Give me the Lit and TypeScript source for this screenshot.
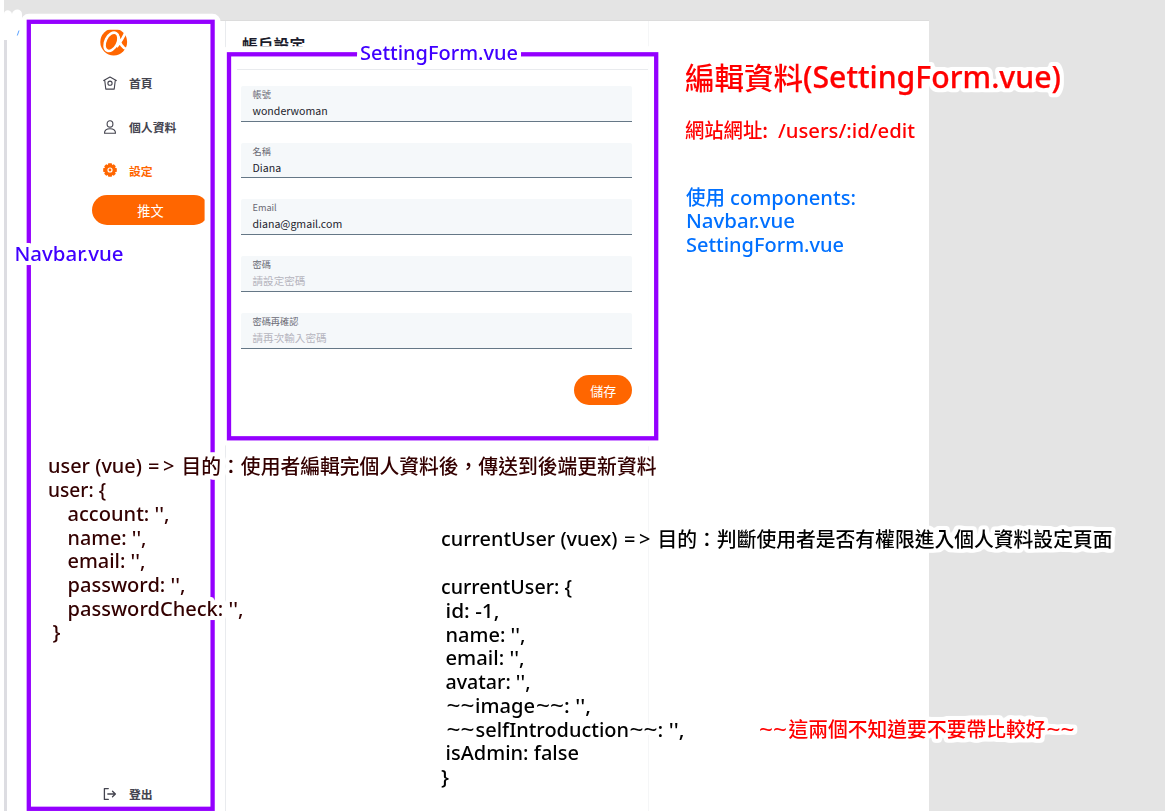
import { LitElement, html, svg, css } from "lit";
import { customElement } from "lit/decorators.js";

interface Note {
  x: number;
  y: number;
  w: number;
  text: string;
  tone: string;
  size?: number;
  cjk?: boolean;
  spread?: boolean;
}

const NOTES: Note[] = [
  { x: 14.5, y: 261, w: 109, text: "Navbar.vue", tone: "violet" },
  { x: 360, y: 60, w: 158, text: "SettingForm.vue", tone: "violet" },
  { x: 685, y: 88.5, w: 118, text: "編輯資料", tone: "red", size: 29.5, cjk: true },
  { x: 803, y: 88, w: 258, text: "(SettingForm.vue)", tone: "red big", size: 30 },
  { x: 685, y: 138, w: 83, text: "網站網址:", tone: "red", cjk: true },
  { x: 778, y: 138, w: 137, text: "/users/:id/edit", tone: "red" },
  { x: 686, y: 205, w: 39, text: "使用", tone: "blue", cjk: true },
  { x: 730, y: 205, w: 126, text: "components:", tone: "blue" },
  { x: 686, y: 228, w: 109, text: "Navbar.vue", tone: "blue" },
  { x: 686, y: 252, w: 158, text: "SettingForm.vue", tone: "blue" },

  { x: 48, y: 473, w: 94, text: "user (vue)", tone: "brown" },
  { x: 148, y: 473, w: 26.5, text: "=>", tone: "brown", spread: true },
  { x: 181.5, y: 473.5, w: 475, text: "目的：使用者編輯完個人資料後，傳送到後端更新資料", tone: "brown", cjk: true },
  { x: 48, y: 497, w: 58, text: "user: {", tone: "brown" },
  { x: 67.5, y: 521, w: 102, text: "account: '',", tone: "brown" },
  { x: 67.5, y: 545, w: 79, text: "name: '',", tone: "brown" },
  { x: 67.5, y: 568, w: 78, text: "email: '',", tone: "brown" },
  { x: 67.5, y: 592, w: 118, text: "password: '',", tone: "brown" },
  { x: 67.5, y: 616, w: 176, text: "passwordCheck: '',", tone: "brown" },
  { x: 52.5, y: 639, w: 8, text: "}", tone: "brown" },

  { x: 441, y: 546, w: 176.5, text: "currentUser (vuex)", tone: "black" },
  { x: 624, y: 546, w: 26.5, text: "=>", tone: "black", spread: true },
  { x: 657.5, y: 546.5, w: 455, text: "目的：判斷使用者是否有權限進入個人資料設定頁面", tone: "black", cjk: true },
  { x: 441, y: 594, w: 131, text: "currentUser: {", tone: "black" },
  { x: 445.5, y: 618, w: 54, text: "id: -1,", tone: "black" },
  { x: 445.5, y: 641.5, w: 80, text: "name: '',", tone: "black" },
  { x: 445.5, y: 665, w: 79, text: "email: '',", tone: "black" },
  { x: 445.5, y: 689, w: 85, text: "avatar: '',", tone: "black" },
  { x: 446.5, y: 713, w: 28, text: "~~", tone: "black" },
  { x: 475, y: 713, w: 60, text: "image", tone: "black" },
  { x: 536, y: 713, w: 28, text: "~~", tone: "black" },
  { x: 564, y: 713, w: 27, text: ": '',", tone: "black" },
  { x: 446.5, y: 736.5, w: 28, text: "~~", tone: "black" },
  { x: 475.5, y: 736.5, w: 153.5, text: "selfIntroduction", tone: "black" },
  { x: 629.5, y: 736.5, w: 28, text: "~~", tone: "black" },
  { x: 657.5, y: 736.5, w: 27, text: ": '',", tone: "black" },
  { x: 445.5, y: 760, w: 133.5, text: "isAdmin: false", tone: "black" },
  { x: 441, y: 784, w: 8, text: "}", tone: "black" },

  { x: 759, y: 736.5, w: 28, text: "~~", tone: "red" },
  { x: 788.5, y: 737, w: 257, text: "這兩個不知道要不要帶比較好", tone: "red", cjk: true },
  { x: 1046.5, y: 736.5, w: 28, text: "~~", tone: "red" },
];

const homeIcon = svg`<g fill="none" stroke="currentColor" stroke-width="1.1" stroke-linejoin="round" stroke-linecap="round">
  <path d="M.7 4.600 7 1l6.300 3.600M1.700 4.100l1.100 9h8.400l1.100-9"/><circle cx="7" cy="7.200" r="2.100"/></g>`;
const userIcon = svg`<g fill="none" stroke="currentColor" stroke-width="1.1" stroke-linejoin="round">
  <ellipse cx="7" cy="3.900" rx="2.900" ry="3.200"/><path d="M1.500 13.200c0-3 2.300-4.500 5.500-4.500s5.500 1.500 5.500 4.500z"/></g>`;
const gearIcon = svg`<path fill="currentColor" fill-rule="evenodd" d="M5.300.2h3.400l.5 1.800 1.600-.8 2 2-.8 1.600 1.800.5v3.400l-1.800.5.8 1.600-2 2-1.600-.8-.5 1.800H5.300L4.800 12l-1.600.8-2-2L2 9.200.2 8.700V5.300L2 4.800l-.8-1.600 2-2 1.600.8zM7 4.400a2.600 2.600 0 1 0 0 5.200 2.600 2.600 0 0 0 0-5.200z"/>
  <circle cx="7" cy="7" r="1.400" fill="currentColor"/>`;
const exitIcon = svg`<g fill="none" stroke="currentColor" stroke-width="1.3" stroke-linejoin="round" stroke-linecap="round">
  <path d="M5.300 1.600H1.400v10.800h3.900M4.800 7h7.300M9.500 4.200 12.400 7 9.500 9.800"/></g>`;

@customElement("side-nav")
class SideNav extends LitElement {
  static styles = css`
    :host {
      display: flex;
      flex-direction: column;
      width: 219px;
      box-sizing: border-box;
      padding: 7px 0 5.500px 85px;
      border-right: 1px solid #e9ebee;
      color: #44444f;
    }
    .logo { display: block; width: 28px; height: 28px; margin-left: 8px; }
    .items { display: flex; flex-direction: column; gap: 20px; padding: 15px 0 0 11.300px; }
    .item {
      display: flex;
      align-items: center;
      gap: 11.700px;
      height: 23.800px;
      font-size: 11.850px;
      font-weight: 700;
    }
    .item svg { width: 14px; height: 14px; display: block; }
    .active { color: #ff6600; }
    .tweet {
      width: 117px;
      height: 30px;
      margin-top: 13px;
      border-radius: 15px;
      background: #ff6600;
      color: #fff;
      font-size: 13.200px;
      line-height: 31px;
      text-align: center;
    }
    .logout { margin: auto 0 0 11.300px; }
  `;

  row(icon: unknown, label: string, cls = "") {
    return html`<div class="item ${cls}"><svg viewBox="0 0 14 14">${icon}</svg><span>${label}</span></div>`;
  }

  render() {
    return html`
      <svg class="logo" viewBox="0 0 28 28">
        <circle cx="13.700" cy="14" r="13.400" fill="#ff6600" />
        <g fill="none" stroke="#fff" stroke-width="2.600">
          <ellipse cx="11.500" cy="13.800" rx="6" ry="9.800" transform="rotate(27 11.500 13.800)" />
          <path d="M26 3C24 8.500 21 13.500 16.500 19M18.500 8.500c.8 5.500 2.500 11.500 9 13" />
        </g>
      </svg>
      <div class="items">
        ${this.row(homeIcon, "首頁")} ${this.row(userIcon, "個人資料")}
        ${this.row(gearIcon, "設定", "active")}
      </div>
      <div class="tweet">推文</div>
      ${this.row(exitIcon, "登出", "logout")}
    `;
  }
}

@customElement("setting-form")
class SettingForm extends LitElement {
  static styles = css`
    :host { display: block; width: 423px; box-sizing: border-box; border-right: 1px solid #f5f6f7; }
    .head {
      height: 49px;
      box-sizing: border-box;
      padding: 12px 0 0 16px;
      border-bottom: 1px solid #e9ebee;
      font-size: 15.800px;
      line-height: 24px;
      font-weight: 700;
      color: #1c1c2c;
    }
    .form { display: flex; flex-direction: column; gap: 20.900px; padding: 16px 15.700px 0 15px; }
    .field {
      height: 35.800px;
      box-sizing: border-box;
      padding: 1px 11.500px 0;
      background: #f5f8fa;
      border-bottom: 1.500px solid #657786;
      border-radius: 2px 2px 0 0;
    }
    .label { height: 15px; line-height: 15px; font-size: 9.200px; color: #696974; }
    .value { height: 16px; line-height: 17px; font-size: 10.600px; color: #1c1c2c; }
    .empty { color: #b5b5be; }
    .save {
      align-self: flex-end;
      width: 58px;
      height: 30px;
      margin-top: 6px;
      border-radius: 15px;
      background: #ff6600;
      color: #fff;
      font-size: 13px;
      line-height: 31px;
      text-align: center;
    }
  `;

  field(label: string, value: string, hint = "") {
    return html`<div class="field">
      <div class="label">${label}</div>
      <div class="value ${value ? "" : "empty"}">${value || hint}</div>
    </div>`;
  }

  render() {
    return html`
      <div class="head">帳戶設定</div>
      <div class="form">
        ${this.field("帳號", "wonderwoman")} ${this.field("名稱", "Diana")}
        ${this.field("Email", "diana@gmail.com")}
        ${this.field("密碼", "", "請設定密碼")}
        ${this.field("密碼再確認", "", "請再次輸入密碼")}
        <div class="save">儲存</div>
      </div>
    `;
  }
}

@customElement("note-layer")
class NoteLayer extends LitElement {
  static styles = css`
    :host { display: block; position: absolute; inset: 0; pointer-events: none; }
    svg { display: block; width: 1165px; height: 811px; }
    text {
      font-family: "Noto Sans", "Noto Sans CJK TC", sans-serif;
      font-weight: 500;
      white-space: pre;
    }
    .cjk { font-family: "Noto Sans CJK TC", sans-serif; }
    .halo-box { fill: none; stroke: #fff; stroke-width: 16px; stroke-linejoin: round; }
    .box { fill: none; stroke: #9400ff; stroke-width: 4.300px; }
    .violet { fill: #4000ff; }
    .red { fill: #ff0000; }
    .blue { fill: #0070ff; }
    .brown { fill: #330000; }
    .black { fill: #000; }
    .big { stroke: #ff0000; stroke-width: 0.250px; }
  `;

  text(n: Note) {
    return svg`<text class="${n.tone} ${n.cjk ? "cjk" : ""}" x=${n.x} y=${n.y} font-size=${n.size ?? 20}
      textLength=${n.w} lengthAdjust=${n.spread ? "spacing" : "spacingAndGlyphs"}>${n.text}</text>`;
  }

  render() {
    return html`<svg viewBox="0 0 1165 811">
      <defs>
        <filter id="halo" filterUnits="userSpaceOnUse" x="0" y="0" width="1165" height="811" color-interpolation-filters="sRGB">
          <feMorphology in="SourceAlpha" operator="dilate" radius="3" />
          <feGaussianBlur stdDeviation="1.800" />
          <feColorMatrix values="0 0 0 0 1  0 0 0 0 1  0 0 0 0 1  0 0 0 5 -0.700" result="glow" />
          <feMerge><feMergeNode in="glow" /><feMergeNode in="SourceGraphic" /></feMerge>
        </filter>
      </defs>
      <path fill="#fff" d="M4 14c0-5 7-5 8 0 1-6 10-6 10 0v26H4z" />
      <path stroke="#5aa2ff" stroke-width="1" d="M17.300 35.500l1.700-5" />
      <rect class="halo-box" x="28.800" y="21.800" width="183.800" height="787" />
      <rect class="halo-box" x="229" y="54.300" width="427.200" height="384" />
      <rect class="box" x="28.800" y="21.800" width="183.800" height="787" />
      <rect class="box" x="229" y="54.300" width="427.200" height="384" />
      <g filter="url(#halo)">${NOTES.map((n) => this.text(n))}</g>
    </svg>`;
  }
}

@customElement("app-root")
class AppRoot extends LitElement {
  static styles = css`
    :host {
      display: block;
      position: relative;
      width: 1165px;
      height: 811px;
      overflow: hidden;
      box-sizing: border-box;
      background: #e4e4e4;
      border-left: 4px solid #fff;
      padding-top: 20px;
      font-family: "Noto Sans CJK TC", sans-serif;
    }
    .page {
      display: flex;
      width: 925px;
      height: 791px;
      box-sizing: border-box;
      background: #fff;
      border-top: 1px solid #dcdcdc;
      border-left: 3px solid #dddde2;
    }
    .notes { position: absolute; inset: 0 0 0 -4px; }
  `;

  render() {
    return html`
      <div class="page">
        <side-nav></side-nav>
        <setting-form></setting-form>
      </div>
      <div class="notes"><note-layer></note-layer></div>
    `;
  }
}
